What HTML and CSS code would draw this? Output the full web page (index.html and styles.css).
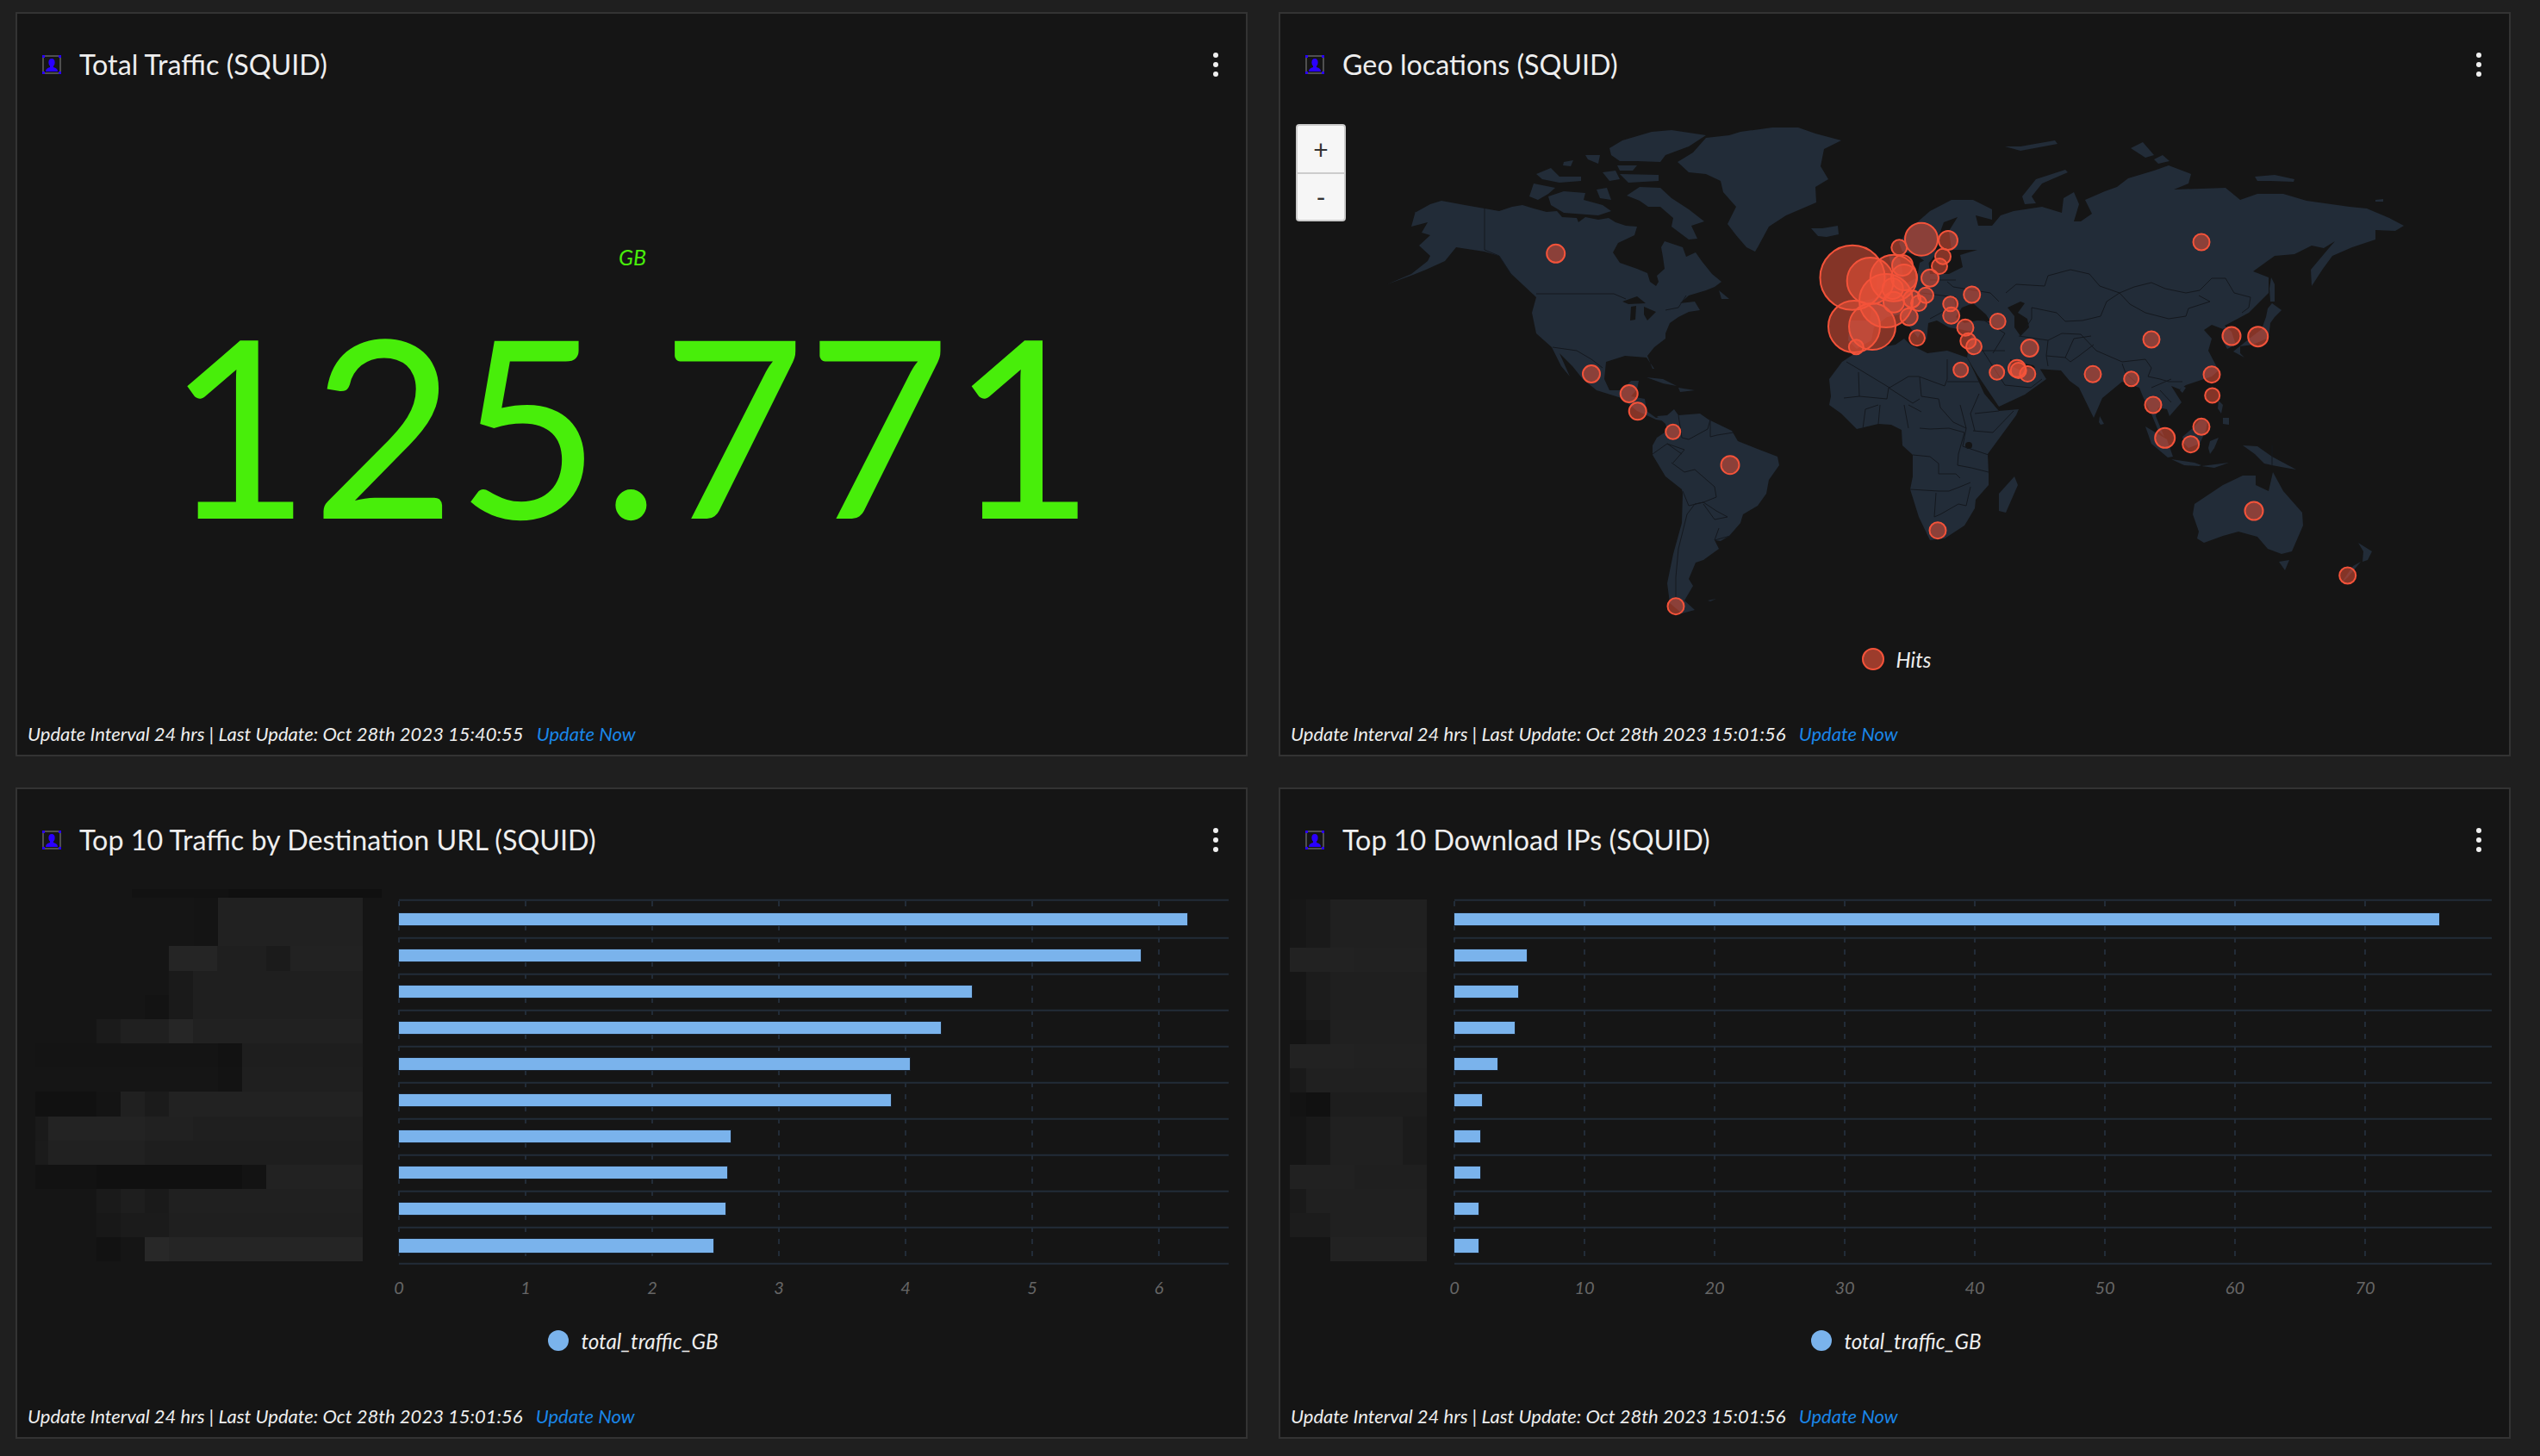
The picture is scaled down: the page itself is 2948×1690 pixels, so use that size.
FILE: index.html
```html
<!DOCTYPE html>
<html lang="en">
<head>
<meta charset="utf-8">
<title>SQUID Dashboard</title>
<link rel="stylesheet" href="styles.css">
</head>
<body>
<svg class="defs" width="0" height="0" aria-hidden="true">
  <symbol id="widget-icon" viewBox="0 0 22 22">
    <rect class="ic-frame" x="1" y="1" width="20" height="20"/>
    <path class="ic-blue" d="M0 0h3v3h-3zM19 0h3v3h-3zM0 19h3v3h-3zM19 19h3v3h-3z"/>
    <ellipse class="ic-blue" cx="11" cy="8.5" rx="3.6" ry="4.5"/>
    <path class="ic-blue" d="M4 19C4 16 6 15 9 14V12h4v2c3 1 5 2 5 5z"/>
  </symbol>
</svg>
<main class="grid">

  <section class="panel">
    <header class="head">
      <svg class="icon"><use href="#widget-icon"/></svg>
      <h2 class="title">Total Traffic (SQUID)</h2>
      <div class="kebab"><i></i><i></i><i></i></div>
    </header>
    <div class="metric">
      <div class="unit">GB</div>
      <div class="value">125.771</div>
    </div>
    <footer class="foot">Update Interval 24 hrs | Last Update: Oct 28th 2023 15:40:55 <a class="now">Update Now</a></footer>
  </section>

  <section class="panel">
    <header class="head">
      <svg class="icon"><use href="#widget-icon"/></svg>
      <h2 class="title">Geo locations (SQUID)</h2>
      <div class="kebab"><i></i><i></i><i></i></div>
    </header>
    <div class="map-wrap">
      <div class="zoomctl"><button class="zbtn">+</button><button class="zbtn">-</button></div>
      <svg class="map" viewBox="1486 94 1426 650" width="1426" height="650">
        <g class="land">
          <!-- North America -->
          <path d="M1638,263 L1643,245 1642,247 1660,237 1673,233 1700,238 1723,242 1740,245 1755,240 1767,238 1780,242 1795,246 1807,245 1813,252 1830,253 1832,258 1840,252 1855,255 1867,253 1875,258 1887,262 1900,263 1897,273 1878,282 1872,293 1880,305 1900,312 1912,317 1915,327 1922,332 1925,327 1923,320 1932,312 1930,298 1928,287 1932,280 1953,287 1957,298 1968,293 1975,303 1987,318 1998,327 1990,333 1980,337 1960,343 1950,352 1967,350 1973,360 1960,362 1948,368 1938,375 1933,387 1933,393 1920,403 1912,413 1918,428 1920,428 1911,415 1886,413 1864,420 1862,440 1868,453 1882,453 1893,442 1902,442 1900,452 1893,460 1909,463 1911,477 1922,485 1931,483 1933,489 1922,487 1900,477 1882,462 1853,453 1837,440 1825,425 1810,410 1822,437 1812,425 1801,403 1783,387 1778,363 1783,345 1767,330 1753,317 1740,297 1723,292 1703,289 1690,287 1677,303 1655,313 1640,319 1610,330 1638,318 1657,303 1660,297 1647,285 1660,273 1650,270 1657,258Z"/>
          <!-- Greenland and Iceland -->
          <path d="M1947,188 1965,177 1980,160 2007,157 2020,153 2057,148 2087,148 2107,155 2137,163 2117,173 2113,193 2122,208 2107,217 2108,235 2073,250 2053,263 2040,287 2037,292 2027,287 2015,273 2005,260 2015,240 2000,223 1997,210 1980,202 1960,200Z"/>
          <path d="M2102,265 2115,265 2133,262 2134,272 2120,275 2110,274Z"/>
          <!-- Arctic Canada -->
          <path d="M1888,227 1903,217 1927,218 1940,230 1960,243 1978,257 1963,262 1970,277 1960,278 1940,263 1942,253 1927,240 1913,240 1903,233Z"/>
          <path d="M1797,228 1815,222 1840,224 1838,232 1860,238 1870,245 1855,250 1815,247 1800,238Z"/>
          <path d="M1775,228 1780,213 1805,218 1797,225 1785,232Z"/>
          <path d="M1853,220 1865,218 1870,232 1857,230Z"/>
          <path d="M1868,172 1883,163 1917,153 1940,151 1980,157 1960,170 1933,180 1927,188 1900,187 1880,187 1870,180Z"/>
          <path d="M1880,202 1925,203 1925,210 1890,212Z"/>
          <path d="M1783,202 1800,195 1810,205 1835,205 1835,210 1810,212 1790,208Z"/>
          <path d="M1840,180 1857,180 1855,190 1843,185Z"/>
          <path d="M1815,188 1826,186 1823,193 1814,192Z"/>
          <path d="M1860,200 1875,198 1880,208 1868,210Z"/>
          <path d="M1877,192 1900,192 1895,198 1880,198Z"/>
          <path d="M1995,337 2007,347 1998,347Z"/>
          <!-- Caribbean -->
          <path d="M1911,438 1930,440 1946,448 1930,445Z"/>
          <path d="M1948,450 1967,453 1950,455Z"/>
          <!-- South America -->
          <path d="M1923,483 1935,482 1943,475 1948,482 1973,480 1983,487 2010,500 2017,512 2037,520 2063,530 2065,540 2053,557 2050,573 2040,587 2023,597 2020,607 2007,622 1997,628 1990,627 1995,637 1977,650 1968,653 1960,672 1965,680 1955,697 1967,708 1952,712 1938,700 1935,677 1942,643 1952,607 1953,573 1952,568 1933,553 1918,528 1918,517 1923,508 1935,500 1933,492Z"/>
          <path d="M1982,697 1992,695 1985,698Z"/>
          <!-- Africa -->
          <path d="M2153,410 2157,408 2200,400 2210,393 2217,400 2237,410 2260,407 2283,415 2292,433 2303,457 2320,477 2343,475 2340,482 2307,527 2308,550 2308,563 2293,580 2292,590 2280,610 2257,625 2240,627 2227,600 2217,568 2220,553 2220,528 2208,517 2207,499 2195,493 2180,492 2155,498 2137,480 2123,470 2125,460 2123,440 2138,420Z"/>
          <path d="M2338,553 2342,563 2328,595 2320,593 2320,573Z"/>
          <!-- Eurasia -->
          <path d="M2145,395 2147,372 2170,372 2172,358 2160,350 2180,345 2205,333 2225,322 2228,305 2238,300 2240,318 2262,318 2278,310 2275,296 2295,290 2265,290 2262,268 2272,252 2256,258 2248,280 2246,296 2238,306 2224,296 2208,292 2204,282 2216,266 2240,245 2265,232 2290,232 2312,243 2312,255 2293,250 2296,262 2312,262 2322,250 2337,245 2370,240 2393,247 2395,230 2407,223 2413,237 2407,257 2415,257 2428,248 2420,232 2443,222 2457,217 2470,207 2500,198 2517,192 2543,202 2540,213 2523,220 2583,218 2600,232 2620,225 2650,225 2677,233 2727,240 2747,242 2773,253 2790,262 2780,268 2757,267 2757,278 2730,287 2707,297 2696,312 2683,332 2682,313 2703,288 2710,280 2697,288 2683,285 2663,295 2640,297 2615,315 2633,322 2633,340 2610,363 2597,370 2582,378 2590,385 2595,400 2585,405 2578,392 2580,382 2567,377 2558,383 2567,393 2563,407 2575,430 2567,437 2537,447 2530,452 2520,448 2532,467 2518,483 2515,475 2505,473 2502,483 2512,507 2505,500 2498,483 2487,460 2483,450 2463,443 2440,462 2430,485 2413,450 2402,442 2392,430 2363,428 2360,424 2345,421 2333,417 2335,425 2345,430 2350,427 2360,428 2365,424 2375,440 2350,458 2320,472 2295,435 2283,415 2285,402 2290,385 2262,380 2248,372 2238,375 2236,395 2222,372 2212,358 2228,378 2232,380 2226,392 2205,365 2190,368 2175,380 2172,395 2155,405Z"/>
          <path d="M2192,296 2205,300 2210,325 2216,335 2195,342 2198,320Z"/>
          <path d="M2178,322 2190,318 2190,332 2178,336Z"/>
          <path d="M2637,352 2648,360 2640,368 2635,375 2633,392 2615,400 2600,402 2600,410 2605,415 2592,408 2612,392 2625,382 2630,368 2632,358Z"/>
          <path d="M2636,322 2640,330 2640,350 2635,350 2634,335Z"/>
          <path d="M2347,228 2363,208 2397,197 2400,200 2370,213 2358,228 2363,236 2350,237Z"/>
          <path d="M2617,205 2640,203 2663,208 2662,211 2635,210 2620,210Z"/>
          <path d="M2757,232 2766,231 2766,234 2757,234Z"/>
          <path d="M2473,172 2487,165 2500,180 2490,183Z"/>
          <path d="M2500,185 2510,180 2518,187 2505,190Z"/>
          <path d="M2327,170 2345,170 2385,163 2388,167 2345,175Z"/>
          <!-- South-East Asia and Oceania -->
          <path d="M2437,483 2442,492 2438,493 2436,490Z"/>
          <path d="M2490,495 2515,510 2522,530 2516,531 2497,515Z"/>
          <path d="M2520,533 2547,537 2555,540 2552,541 2535,540Z"/>
          <path d="M2555,541 2587,537 2570,543Z"/>
          <path d="M2533,507 2547,495 2555,485 2562,490 2560,500 2553,515 2540,520 2535,515Z"/>
          <path d="M2565,512 2575,508 2570,520 2565,527 2563,520Z"/>
          <path d="M2575,465 2580,470 2578,480 2574,474Z"/>
          <path d="M2580,485 2587,485 2587,493 2580,492Z"/>
          <path d="M2533,448 2537,450 2533,456 2530,453Z"/>
          <path d="M2603,517 2620,518 2637,530 2665,545 2653,543 2637,540 2628,538 2617,527Z"/>
          <path d="M2547,585 2580,563 2603,552 2618,552 2618,563 2633,570 2638,548 2650,570 2672,595 2673,610 2660,640 2648,643 2632,637 2620,623 2598,617 2580,622 2558,630 2550,625 2552,617 2545,597Z"/>
          <path d="M2645,652 2657,650 2652,662Z"/>
          <path d="M2737,630 2753,640 2748,650 2742,652 2743,640Z"/>
          <path d="M2740,652 2725,670 2717,677 2731,657Z"/>
        </g>
        <g class="water">
          <path d="M2277,357 2290,352 2305,365 2310,373 2295,372 2280,375 2270,368Z"/>
          <path d="M2330,357 2345,350 2350,352 2342,363 2353,370 2355,380 2345,390 2338,380 2338,367Z"/>
          <path d="M1883,350 1900,344 1910,352 1890,353Z"/>
          <path d="M1893,356 1899,355 1898,371 1892,372Z"/>
          <path d="M1908,356 1922,362 1912,372 1908,365Z"/>
          <circle cx="2285" cy="517" r="4"/>
        </g>
        <g class="border">
          <path d="M1783,341H1873L1887,347M1723,242V290L1740,297 1755,320M1933,360 1948,357 1957,343M1802,403 1830,407 1847,417 1860,427"/>
          <path d="M2143,420 2160,430 2193,450 2215,437 2227,437 2257,448 2260,440 2260,417M2260,443H2300M2228,438 2230,460 2250,463 2252,473 2267,490 2282,497M2297,457 2287,480 2292,500M2157,432 2158,460 2140,462M2190,463 2192,450 2220,468 2228,463M2158,460 2190,463M2210,470 2215,497M2215,470 2230,478"/>
          <path d="M2228,497 2240,498 2262,497 2280,502 2273,527 2272,540 2288,543 2308,548M2220,528 2240,530 2250,538 2250,550 2270,550 2275,555M2217,568 2250,570 2262,570 2275,565 2287,560M2247,572 2245,600 2252,597 2273,585 2282,587 2287,565M2290,500 2313,502 2337,477M2292,480 2320,477M2278,518 2308,528M2275,470 2282,497 2278,518M2162,498 2165,475 2180,470M2180,492 2182,470"/>
          <path d="M1948,482 1952,508 1960,510 1982,498 1985,487M1942,537 1955,522 1935,515 1918,527M1935,515 1952,527M1940,537 1955,548 1967,545 1990,565 1992,577 1977,583 1967,585 1958,597 1948,637 1945,670 1945,693M1953,570 1960,587 1977,583M1977,583 1992,593 2005,600 1990,603 1977,585M1995,613 1990,627 2008,622M1985,507 1993,505 2012,502M1985,487 1985,507"/>
          <path d="M2328,340 2340,330 2373,332 2377,320 2403,313 2425,318 2437,332 2460,340 2477,333 2497,328 2513,335 2537,340 2553,337 2567,323 2583,323 2593,340 2612,345 2610,357 2602,363M2460,340 2472,353 2490,363 2517,370 2537,367 2540,358 2565,350 2552,343M2460,340 2445,350 2438,367 2417,372 2397,373 2387,363 2358,357 2358,370 2345,390"/>
          <path d="M2343,390 2377,395 2393,387 2415,388 2433,407 2463,420 2490,417 2497,427 2493,437 2507,440 2517,443 2533,443M2377,395 2375,413 2397,415 2407,393 2427,390M2377,425 2375,413M2397,415 2403,420 2413,413 2430,400M2463,422 2467,433 2480,445M2497,450 2520,440M2507,453 2520,467M2300,370 2327,387 2313,410M2300,407 2327,407M2327,447 2357,450 2370,440M2300,405 2327,447"/>
          <path d="M2267,333 2310,340 2320,350M2260,327 2267,333M2230,340 2270,345M2240,325 2270,325M2268,345 2270,355M2240,370 2262,358M2205,345 2230,345M2580,382 2595,380"/>
          <path d="M2637,517V541"/>
        </g>
        <g class="hits">
          <circle cx="2150" cy="322.3" r="37.5"/><circle cx="2170.7" cy="326" r="27"/><circle cx="2197.7" cy="322.7" r="27"/><circle cx="2189" cy="349" r="31"/><circle cx="2152" cy="379" r="30"/><circle cx="2173" cy="379" r="27"/>
          <circle cx="2230" cy="277.7" r="19"/><circle cx="2261" cy="279" r="11"/><circle cx="2204.3" cy="287.3" r="9"/><circle cx="2255" cy="297.7" r="9"/><circle cx="2251" cy="309" r="9"/><circle cx="2208" cy="308" r="12"/><circle cx="2240" cy="322.7" r="10"/><circle cx="2210" cy="322" r="15"/><circle cx="2235" cy="342.7" r="9"/><circle cx="2198" cy="350.7" r="12"/><circle cx="2196.7" cy="335" r="12"/><circle cx="2219" cy="347" r="10"/><circle cx="2227" cy="352" r="9"/><circle cx="2215.7" cy="367.7" r="10"/><circle cx="2225" cy="392.3" r="9"/><circle cx="2154.3" cy="402.7" r="8.5"/>
          <circle cx="2288.7" cy="342" r="9.5"/><circle cx="2263.7" cy="352.7" r="8.5"/><circle cx="2264.7" cy="366.3" r="9.5"/><circle cx="2281" cy="380.3" r="9.5"/><circle cx="2284.3" cy="395.7" r="9"/><circle cx="2291" cy="402.3" r="9"/><circle cx="2318.7" cy="373" r="9"/><circle cx="2355.7" cy="404" r="10"/><circle cx="2275.7" cy="429.3" r="8.5"/><circle cx="2317.7" cy="432.3" r="8.5"/><circle cx="2341" cy="427.7" r="10"/><circle cx="2342.7" cy="430" r="9"/><circle cx="2353.3" cy="434" r="9"/>
          <circle cx="1805.7" cy="294.3" r="10.5"/><circle cx="1847" cy="434" r="10"/><circle cx="1890.7" cy="457" r="10"/><circle cx="1900.7" cy="477.3" r="10"/><circle cx="1941.7" cy="501.3" r="8.5"/><circle cx="2008" cy="539.7" r="10.5"/><circle cx="1945" cy="703.7" r="9.5"/><circle cx="2249" cy="615.7" r="9.5"/>
          <circle cx="2555" cy="281" r="9.5"/><circle cx="2497" cy="394" r="9.5"/><circle cx="2590" cy="390" r="10.5"/><circle cx="2620.7" cy="390.7" r="11.5"/><circle cx="2429" cy="434.3" r="9.5"/><circle cx="2473.7" cy="439.7" r="8.5"/><circle cx="2567" cy="434.7" r="9.5"/><circle cx="2567.7" cy="459" r="8.5"/><circle cx="2499" cy="470" r="9.5"/><circle cx="2555" cy="495.3" r="9.5"/><circle cx="2512.7" cy="508.3" r="11.5"/><circle cx="2542.7" cy="515.7" r="9.5"/><circle cx="2616" cy="593" r="10.5"/><circle cx="2724.7" cy="668" r="9.5"/>
        </g>
      </svg>
    </div>
    <div class="legend legend-map"><span class="swatch swatch-hits"></span><span class="legend-label">Hits</span></div>
    <footer class="foot">Update Interval 24 hrs | Last Update: Oct 28th 2023 15:01:56 <a class="now">Update Now</a></footer>
  </section>

  <section class="panel">
    <header class="head">
      <svg class="icon"><use href="#widget-icon"/></svg>
      <h2 class="title">Top 10 Traffic by Destination URL (SQUID)</h2>
      <div class="kebab"><i></i><i></i><i></i></div>
    </header>
    <svg class="chart" viewBox="20 994 1426 522" width="1426" height="522">
      <g class="mosaic" shape-rendering="crispEdges">
        <rect x="153" y="1032" width="112" height="10" fill="#121212"/><rect x="265" y="1032" width="178" height="10" fill="#101010"/>
        <rect x="225" y="1042" width="28" height="56" fill="#141414"/><rect x="253" y="1042" width="168" height="56" fill="#212121"/>
        <rect x="196" y="1098" width="56" height="29" fill="#252525"/><rect x="252" y="1098" width="57" height="29" fill="#1f1f1f"/><rect x="309" y="1098" width="28" height="29" fill="#1b1b1b"/><rect x="337" y="1098" width="84" height="29" fill="#222222"/>
        <rect x="196" y="1127" width="28" height="28" fill="#1a1a1a"/><rect x="224" y="1127" width="197" height="28" fill="#1f1f1f"/>
        <rect x="168" y="1155" width="28" height="28" fill="#131313"/><rect x="196" y="1155" width="28" height="28" fill="#1a1a1a"/><rect x="224" y="1155" width="197" height="28" fill="#1f1f1f"/>
        <rect x="112" y="1183" width="28" height="28" fill="#1b1b1b"/><rect x="140" y="1183" width="56" height="28" fill="#202020"/><rect x="196" y="1183" width="28" height="28" fill="#262626"/><rect x="224" y="1183" width="197" height="28" fill="#212121"/>
        <rect x="41" y="1211" width="212" height="28" fill="#141414"/><rect x="253" y="1211" width="28" height="28" fill="#121212"/><rect x="281" y="1211" width="140" height="28" fill="#1e1e1e"/>
        <rect x="253" y="1239" width="28" height="28" fill="#131313"/><rect x="281" y="1239" width="140" height="28" fill="#1f1f1f"/>
        <rect x="41" y="1267" width="71" height="29" fill="#111111"/><rect x="112" y="1267" width="28" height="29" fill="#141414"/><rect x="140" y="1267" width="28" height="29" fill="#202020"/><rect x="168" y="1267" width="28" height="29" fill="#1b1b1b"/><rect x="196" y="1267" width="225" height="29" fill="#222222"/>
        <rect x="41" y="1296" width="15" height="28" fill="#1a1a1a"/><rect x="56" y="1296" width="112" height="28" fill="#232323"/><rect x="168" y="1296" width="56" height="28" fill="#212121"/><rect x="224" y="1296" width="197" height="28" fill="#1f1f1f"/>
        <rect x="41" y="1324" width="15" height="28" fill="#1b1b1b"/><rect x="56" y="1324" width="112" height="28" fill="#212121"/><rect x="168" y="1324" width="253" height="28" fill="#1e1e1e"/>
        <rect x="41" y="1352" width="71" height="28" fill="#121212"/><rect x="112" y="1352" width="169" height="28" fill="#101010"/><rect x="281" y="1352" width="28" height="28" fill="#131313"/><rect x="309" y="1352" width="112" height="28" fill="#222222"/>
        <rect x="112" y="1380" width="28" height="28" fill="#1a1a1a"/><rect x="140" y="1380" width="28" height="28" fill="#1e1e1e"/><rect x="168" y="1380" width="28" height="28" fill="#1a1a1a"/><rect x="196" y="1380" width="225" height="28" fill="#202020"/>
        <rect x="112" y="1408" width="28" height="28" fill="#181818"/><rect x="140" y="1408" width="56" height="28" fill="#1b1b1b"/><rect x="196" y="1408" width="225" height="28" fill="#1f1f1f"/>
        <rect x="112" y="1436" width="28" height="28" fill="#121212"/><rect x="140" y="1436" width="28" height="28" fill="#151515"/><rect x="168" y="1436" width="28" height="28" fill="#282828"/><rect x="196" y="1436" width="225" height="28" fill="#252525"/>
      </g>
      <path class="grid-v" d="M463 1046V1460M610 1046V1460M757 1046V1460M904 1046V1460M1051 1046V1460M1198 1046V1460M1345 1046V1460"/>
      <path class="grid-h" d="M463 1044.7H1426M463 1088.7H1426M463 1130.7H1426M463 1172.7H1426M463 1214.7H1426M463 1256.7H1426M463 1298.7H1426M463 1340.7H1426M463 1382.7H1426M463 1424.7H1426M463 1466.7H1426"/>
      <g class="bars">
        <rect x="463" y="1060" width="915" height="14"/><rect x="463" y="1102" width="861" height="14"/><rect x="463" y="1144" width="665" height="14"/><rect x="463" y="1186" width="629" height="14"/><rect x="463" y="1228" width="593" height="14"/><rect x="463" y="1270" width="571" height="14"/><rect x="463" y="1312" width="385" height="14"/><rect x="463" y="1354" width="381" height="14"/><rect x="463" y="1396" width="379" height="14"/><rect x="463" y="1438" width="365" height="16"/>
      </g>
      <g class="axis">
        <text x="463" y="1502">0</text><text x="610" y="1502">1</text><text x="757" y="1502">2</text><text x="904" y="1502">3</text><text x="1051" y="1502">4</text><text x="1198" y="1502">5</text><text x="1345" y="1502">6</text>
      </g>
    </svg>
    <div class="legend legend-chart"><span class="swatch swatch-traffic"></span><span class="legend-label">total_traffic_GB</span></div>
    <footer class="foot">Update Interval 24 hrs | Last Update: Oct 28th 2023 15:01:56 <a class="now">Update Now</a></footer>
  </section>

  <section class="panel">
    <header class="head">
      <svg class="icon"><use href="#widget-icon"/></svg>
      <h2 class="title">Top 10 Download IPs (SQUID)</h2>
      <div class="kebab"><i></i><i></i><i></i></div>
    </header>
    <svg class="chart" viewBox="1486 994 1426 522" width="1426" height="522">
      <g class="mosaic" shape-rendering="crispEdges">
        <rect x="1497" y="1044" width="19" height="56" fill="#171717"/><rect x="1516" y="1044" width="28" height="56" fill="#1a1a1a"/><rect x="1544" y="1044" width="112" height="56" fill="#202020"/>
        <rect x="1497" y="1100" width="75" height="28" fill="#222222"/><rect x="1572" y="1100" width="84" height="28" fill="#212121"/>
        <rect x="1497" y="1128" width="19" height="56" fill="#161616"/><rect x="1516" y="1128" width="28" height="56" fill="#1c1c1c"/><rect x="1544" y="1128" width="112" height="56" fill="#1f1f1f"/>
        <rect x="1497" y="1184" width="19" height="28" fill="#141414"/><rect x="1516" y="1184" width="28" height="28" fill="#181818"/><rect x="1544" y="1184" width="112" height="28" fill="#202020"/>
        <rect x="1497" y="1212" width="75" height="28" fill="#222222"/><rect x="1572" y="1212" width="84" height="28" fill="#212121"/>
        <rect x="1497" y="1240" width="19" height="28" fill="#1a1a1a"/><rect x="1516" y="1240" width="140" height="28" fill="#202020"/>
        <rect x="1497" y="1268" width="19" height="28" fill="#131313"/><rect x="1516" y="1268" width="28" height="28" fill="#111111"/><rect x="1544" y="1268" width="112" height="28" fill="#1d1d1d"/>
        <rect x="1497" y="1296" width="19" height="56" fill="#151515"/><rect x="1516" y="1296" width="28" height="56" fill="#191919"/><rect x="1544" y="1296" width="84" height="56" fill="#202020"/><rect x="1628" y="1296" width="28" height="56" fill="#1b1b1b"/>
        <rect x="1497" y="1352" width="75" height="28" fill="#212121"/><rect x="1572" y="1352" width="84" height="28" fill="#1f1f1f"/>
        <rect x="1497" y="1380" width="19" height="28" fill="#1a1a1a"/><rect x="1516" y="1380" width="140" height="28" fill="#202020"/>
        <rect x="1497" y="1408" width="47" height="28" fill="#1c1c1c"/><rect x="1544" y="1408" width="112" height="28" fill="#202020"/>
        <rect x="1544" y="1436" width="112" height="28" fill="#222222"/>
      </g>
      <path class="grid-v" d="M1688 1046V1460M1839 1046V1460M1990 1046V1460M2141 1046V1460M2292 1046V1460M2443 1046V1460M2594 1046V1460M2745 1046V1460"/>
      <path class="grid-h" d="M1688 1044.7H2892M1688 1088.7H2892M1688 1130.7H2892M1688 1172.7H2892M1688 1214.7H2892M1688 1256.7H2892M1688 1298.7H2892M1688 1340.7H2892M1688 1382.7H2892M1688 1424.7H2892M1688 1466.7H2892"/>
      <g class="bars">
        <rect x="1688" y="1060" width="1143" height="14"/><rect x="1688" y="1102" width="84" height="14"/><rect x="1688" y="1144" width="74" height="14"/><rect x="1688" y="1186" width="70" height="14"/><rect x="1688" y="1228" width="50" height="14"/><rect x="1688" y="1270" width="32" height="14"/><rect x="1688" y="1312" width="30" height="14"/><rect x="1688" y="1354" width="30" height="14"/><rect x="1688" y="1396" width="28" height="14"/><rect x="1688" y="1438" width="28" height="16"/>
      </g>
      <g class="axis">
        <text x="1688" y="1502">0</text><text x="1839" y="1502">10</text><text x="1990" y="1502">20</text><text x="2141" y="1502">30</text><text x="2292" y="1502">40</text><text x="2443" y="1502">50</text><text x="2594" y="1502">60</text><text x="2745" y="1502">70</text>
      </g>
    </svg>
    <div class="legend legend-chart"><span class="swatch swatch-traffic"></span><span class="legend-label">total_traffic_GB</span></div>
    <footer class="foot">Update Interval 24 hrs | Last Update: Oct 28th 2023 15:01:56 <a class="now">Update Now</a></footer>
  </section>

</main>
</body>
</html>
```

FILE: styles.css
```css
* { box-sizing: border-box; }

html, body {
  margin: 0;
  height: 100%;
  background: #1f1f1f;
  overflow: hidden;
}

body {
  font-family: "Lato", "Liberation Sans", sans-serif;
  color: #eeeeee;
}

.defs { position: absolute; }

.grid {
  display: grid;
  grid-template-columns: 1430px 1430px;
  grid-template-rows: 864px 756px;
  gap: 36px;
  padding: 14px 34px 20px 18px;
}

.panel {
  display: flex;
  flex-direction: column;
  background: #151515;
  border: 2px solid #333333;
  min-height: 0;
}

.head {
  display: flex;
  align-items: center;
  height: 78px;
  padding: 40px 32px 0 29px;
  flex: none;
}

.icon { width: 22px; height: 22px; flex: none; }
.ic-frame { fill: none; stroke: #8a8a8a; stroke-width: 1; }
.ic-blue { fill: #2a00ff; }

.title {
  margin: 0 0 0 21px;
  font-size: 32.25px;
  line-height: 38px;
  font-weight: 400;
  color: #eeeeee;
  flex: 1;
}

.kebab { display: flex; flex-direction: column; gap: 5px; flex: none; }
.kebab i { width: 6px; height: 6px; border-radius: 50%; background: #f0f0f0; display: block; }

.metric {
  flex: 1;
  display: flex;
  flex-direction: column;
  align-items: center;
  padding-top: 190px;
}

.unit {
  font-size: 25px;
  line-height: 28px;
  font-style: italic;
  color: #48ee0a;
  margin-right: -2px;
}

.value {
  font-size: 288px;
  line-height: 340px;
  letter-spacing: 1.2px;
  margin-top: 9px;
  color: #48ee0a;
  white-space: nowrap;
}

.map-wrap { position: relative; flex: none; height: 650px; }
.map, .chart { display: block; flex: none; }

.zoomctl {
  position: absolute;
  left: 18px;
  top: 50px;
  width: 58px;
  height: 113px;
  display: flex;
  flex-direction: column;
  background: #f6f6f6;
  border: 2px solid #cccccc;
  border-radius: 4px;
}

.zbtn {
  flex: 1;
  border: 0;
  background: transparent;
  padding: 0;
  font-family: "Lato", sans-serif;
  font-size: 30px;
  font-weight: 400;
  color: #333333;
}

.zbtn + .zbtn { border-top: 2px solid #cccccc; }

.land path { fill: #222c38; }
.water path, .water circle { fill: #151515; }
.border path { fill: none; stroke: #14181e; stroke-width: 1; stroke-linejoin: round; }
.hits circle { fill: #f4533a; fill-opacity: 0.5; stroke: #f4533a; stroke-width: 2; }

.grid-v { fill: none; stroke: #222c38; stroke-width: 2; stroke-dasharray: 6 8; }
.grid-h { fill: none; stroke: #222c38; stroke-width: 2; }
.bars rect { fill: #7ab3ec; stroke: #18202a; stroke-width: 2; paint-order: stroke; }
.axis text {
  font-family: "Lato", sans-serif;
  font-size: 20px;
  font-style: italic;
  fill: #666666;
  text-anchor: middle;
}

.legend {
  display: flex;
  align-items: center;
  justify-content: center;
  height: 28px;
  padding-left: 4px;
  font-size: 24.25px;
  font-style: italic;
  color: #eeeeee;
  flex: none;
}

.legend-map { margin-top: 7px; }
.legend-chart { margin-top: 26px; }

.swatch { width: 24px; height: 24px; border-radius: 50%; flex: none; margin-right: 14px; }
.swatch-traffic { background: #7ab3ec; }
.swatch-hits { width: 26px; height: 26px; background: #9c3c2c; border: 2px solid #f4533a; }

.foot {
  margin-top: auto;
  padding: 0 0 10px 12px;
  font-size: 22px;
  line-height: 28px;
  font-style: italic;
  color: #eeeeee;
  white-space: nowrap;
  flex: none;
}

.now { color: #1a86e8; margin-left: 10px; }
```
